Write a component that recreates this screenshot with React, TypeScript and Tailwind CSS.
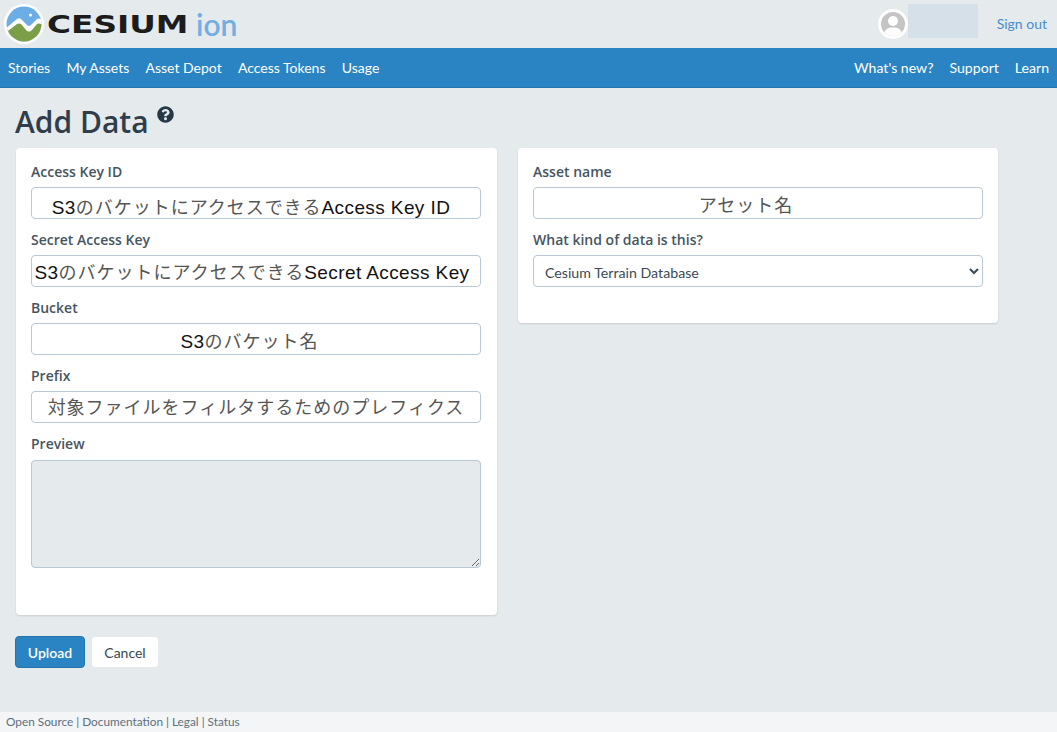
import { FaQuestionCircle } from "react-icons/fa";

const navLeft = ["Stories", "My Assets", "Asset Depot", "Access Tokens", "Usage"];
const navRight = ["What's new?", "Support", "Learn"];

function Logo() {
  return (
    <svg width="40" height="40" viewBox="0 0 40 40" className="shrink-0">
      <defs>
        <clipPath id="disc">
          <circle cx="20" cy="20" r="17.5" />
        </clipPath>
      </defs>
      <circle cx="20" cy="20" r="20" fill="#fff" />
      <g clipPath="url(#disc)">
        <rect width="40" height="40" fill="#6cade6" />
        <path d="M0 26 L13 15 Q15 13.5 17 15 L23 21 Q25 23 27 21 L33 15 Q35 14 37 15 L40 17 V40 H0 Z" fill="#fff" />
        <path d="M0 30 L13 20 Q15 19 17 20 L22 26 Q25 29 28 26 L33 20 Q35 19 37 20 L40 22 V40 H0 Z" fill="#7b9e48" />
        <circle cx="26.5" cy="11" r="1.6" fill="#fff" />
      </g>
    </svg>
  );
}

function Label({ children }: { children: string }) {
  return <label className="block h-[28px] text-[14px] leading-[26px] font-semibold text-[#46555f]">{children}</label>;
}

// latin and japanese runs are styled apart, the latin part reads darker in the screenshot
function Field({ label, value, shift = "", offset = "pt-[2px]" }: { label: string; value: string; shift?: string; offset?: string }) {
  const runs = value.match(/[\x00-\x7f]+|[^\x00-\x7f]+/g) ?? [];
  return (
    <div className="mb-[8px]">
      <Label>{label}</Label>
      <div className={`flex h-[32px] w-full items-center justify-center overflow-hidden rounded-[4px] border border-[#b9c8d4] bg-white font-['Liberation_Sans','Noto_Sans_CJK_JP',sans-serif] whitespace-nowrap ${shift} ${offset}`}>
        {runs.map((run, i) =>
          /^[\x00-\x7f]/.test(run) ? (
            <span key={i} className="text-[19px] tracking-[0.4px] whitespace-pre text-[#111]">{run}</span>
          ) : (
            <span key={i} className="text-[18px] tracking-[1px] text-[#555]">{run}</span>
          )
        )}
      </div>
    </div>
  );
}

export default function App() {
  return (
    <div className="flex min-h-[732px] flex-col bg-[#e5eaed] font-['Lato',sans-serif]">
      <header className="flex h-[48px] items-center pr-[10px] pl-[4px]">
        <Logo />
        <span className="ml-[3px] inline-block w-[140px] origin-left scale-x-[1.31] font-['DejaVu_Sans',sans-serif] text-[25px] leading-none font-bold text-[#1c1c1c]">CESIUM</span>
        <span className="ml-[9px] text-[30px] leading-none font-semibold text-[#72ade3]">ion</span>
        <div className="ml-auto flex items-center">
          <div className="flex h-[30px] w-[30px] items-center justify-center overflow-hidden rounded-full border-[3px] border-white bg-[#c4c4c4]">
            <svg width="24" height="24" viewBox="0 0 24 24" className="shrink-0">
              <circle cx="12" cy="9" r="5" fill="#fff" />
              <path d="M3 24 C3 17 7 15.5 12 15.5 S21 17 21 24 Z" fill="#fff" />
            </svg>
          </div>
          <div className="-mt-[6px] h-[34px] w-[70px] bg-[#d5e0e9]" />
          <a className="-mt-[2px] ml-[19px] text-[14px] text-[#4a8ccb]">Sign out</a>
        </div>
      </header>

      <nav className="flex h-[40px] items-center justify-between border-b border-[#2474ad] bg-[#2a84c3] px-[8px] text-[14px] text-white">
        <div className="flex gap-[16.25px]">
          {navLeft.map((item) => (
            <a key={item}>{item}</a>
          ))}
        </div>
        <div className="flex gap-[16px] text-[14.1px]">
          {navRight.map((item) => (
            <a key={item}>{item}</a>
          ))}
        </div>
      </nav>

      <main className="flex-1 px-[15px]">
        <div className="flex h-[60px] items-start pt-[15px]">
          <h1 className="font-['Open_Sans',sans-serif] text-[30px] leading-[38px] font-semibold text-[#2f3e4a]">Add Data</h1>
          <FaQuestionCircle size={17} className="mt-[3px] ml-[8px] text-[#263845]" />
        </div>

        <div className="ml-[1px] flex items-start gap-[21px] font-['Open_Sans',sans-serif]">
          <section className="h-[467px] w-[481px] rounded-[4px] bg-white pt-[11px] pr-[16px] pl-[15px] shadow-[0_1px_2px_rgba(0,0,0,0.12)]">
            <Field label="Access Key ID" value="S3のバケットにアクセスできるAccess Key ID" shift="pr-[10px]" offset="pt-[11px]" />
            <Field label="Secret Access Key" value="S3のバケットにアクセスできるSecret Access Key" shift="pr-[8px]" offset="pt-[5px]" />
            <Field label="Bucket" value="S3のバケット名" shift="pr-[13px]" offset="pt-[7px]" />
            <Field label="Prefix" value="対象ファイルをフィルタするためのプレフィクス" offset="pt-[2px]" />
            <Label>Preview</Label>
            <textarea readOnly className="mt-[1px] block h-[108px] w-full rounded-[4px] border border-[#b9c8d4] bg-[#e5eaed]" />
          </section>

          <section className="h-[175px] w-[480px] rounded-[4px] bg-white px-[15px] pt-[11px] shadow-[0_1px_2px_rgba(0,0,0,0.12)]">
            <Field label="Asset name" value="アセット名" shift="pr-[24px]" offset="pt-[6px]" />
            <Label>What kind of data is this?</Label>
            <select className="block h-[32px] w-full rounded-[4px] border border-[#b9c8d4] bg-white px-[7px] pt-[3px] font-['Lato',sans-serif] text-[14.2px] text-[#3b4a55]">
              <option>Cesium Terrain Database</option>
            </select>
          </section>
        </div>

        <div className="mt-[21px] flex items-center gap-[7px] text-[14px]">
          <button className="h-[32px] w-[70px] rounded-[4px] border border-[#2474ad] bg-[#2a84c3] font-semibold text-white">Upload</button>
          <button className="h-[30px] w-[66px] rounded-[4px] bg-white text-[#37474f]">Cancel</button>
        </div>
      </main>

      <footer className="flex h-[20px] items-center bg-[#f3f5f6] px-[6px] text-[11.8px] text-[#5d7080]">
        Open Source | Documentation | Legal | Status
      </footer>
    </div>
  );
}
